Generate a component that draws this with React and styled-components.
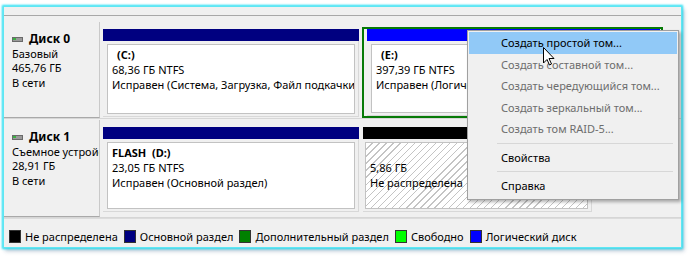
import React from "react";
import styled, { createGlobalStyle } from "styled-components";

const Global = createGlobalStyle`
  html, body { margin: 0; padding: 0; background: #ffffff; }
  body { font-family: "Noto Sans", "Open Sans", sans-serif; font-size: 11px; color: #000; }
`;

const Page = styled.div`
  width: 690px;
  height: 263px;
  padding: 6px 0 0 3px;
  box-sizing: border-box;
`;

const Panel = styled.div`
  position: relative;
  width: 679px;
  height: 242px;
  background: #f0f0f0;
  border: 1px solid #5fe6f2;
  box-sizing: border-box;
  box-shadow: 0 0 2px 1px #22e0f5, 2px 3px 4px rgba(40, 80, 120, 0.35);
  display: flex;
  flex-direction: column;
`;

const TopStrip = styled.div`
  height: 8px;
  border-bottom: 1px solid #a8a8a8;
  background: #f0f0f0;
  flex: none;
`;

const Rows = styled.div`
  padding-top: ${(p) => p.$top}px;
  display: flex;
  flex-direction: column;
  gap: 1px;
  flex: none;
`;

const Row = styled.div`
  display: flex;
  height: ${(p) => p.$h}px;
  border-bottom: 1px solid #d6d6d6;
`;

const DiskLabel = styled.div`
  width: 96px;
  flex: none;
  border-right: 1px solid #c9c9c9;
  border-bottom: 1px solid #a9a9a9;
  box-sizing: border-box;
  padding: 10px 0 0 8px;
  line-height: 14.6px;
  white-space: nowrap;
  overflow: hidden;
`;

const DiskTitle = styled.div`
  display: flex;
  align-items: center;
  gap: 6px;
  font-weight: bold;
  font-size: 12px;
`;

const Partitions = styled.div`
  flex: 1;
  display: flex;
  align-items: flex-start;
  padding: 7px 0 0 3px;
`;

const Partition = styled.div`
  width: ${(p) => p.$w}px;
  margin-left: ${(p) => p.$ml || 0}px;
  flex: none;
  display: flex;
  flex-direction: column;
`;

const Bar = styled.div`
  height: 12px;
  background: ${(p) => p.$color};
`;

const PartBody = styled.div`
  height: ${(p) => p.$h}px;
  padding: 3px 3px 2px ${(p) => p.$pl || 4}px;
  box-sizing: border-box;
  background: #f0f0f0;
  border-right: 1px solid #d8d8d8;
  border-bottom: 1px solid #d8d8d8;
  display: flex;
`;

const Inner = styled.div`
  flex: 1;
  background: ${(p) =>
    p.$hatched
      ? "repeating-linear-gradient(135deg, #ffffff 0 4px, #c4c4c4 4px 5px)"
      : "#ffffff"};
  border: 1px solid #c2c2c2;
  padding: 2px 0 0 4px;
  line-height: 15px;
  white-space: nowrap;
  overflow: hidden;
`;

const VolName = styled.div`
  font-weight: bold;
  padding-left: ${(p) => p.$pl || 0}px;
  height: 15px;
`;

const ExtFrame = styled.div`
  width: 301px;
  margin: -2px 0 0 3px;
  border: 2px solid #077a07;
  box-sizing: border-box;
  padding: 0 0 0 3px;
  flex: none;
`;

const Legend = styled.div`
  flex: 1;
  display: flex;
  align-items: center;
  padding: 6px 0 0 5px;
  border-top: 1px solid #dcdcdc;
  gap: 6px;
`;

const LegendItem = styled.div`
  display: flex;
  align-items: center;
  gap: 4px;
  white-space: nowrap;
`;

const Swatch = styled.span`
  width: 10px;
  height: 11px;
  background: ${(p) => p.$color};
  border: 1px solid #333;
  display: inline-block;
`;

const Menu = styled.div`
  position: absolute;
  left: 463px;
  top: 23px;
  width: 212px;
  background: #f0f0f0;
  border: 1px solid #a0a0a0;
  box-sizing: border-box;
  padding: 1px 1px 2px 1px;
  box-shadow: 2px 2px 3px rgba(0, 0, 0, 0.3);
  z-index: 2;
`;

const MenuItem = styled.div`
  height: 21.5px;
  line-height: 21.5px;
  padding-left: 32px;
  white-space: nowrap;
  color: ${(p) => (p.$disabled ? "#6d6d6d" : "#000")};
  background: ${(p) => (p.$hover ? "#91c9f7" : "transparent")};
`;

const MenuSep = styled.div`
  height: 1px;
  background: #d7d7d7;
  margin: 3px 4px 3px 28px;
`;

const Cursor = styled.svg`
  position: absolute;
  left: 539px;
  top: 40px;
  z-index: 3;
`;

const DiskIcon = () => (
  <svg width="11" height="5" viewBox="0 0 11 5">
    <rect x="0.5" y="0.5" width="10" height="4" fill="#9a9a9a" stroke="#6a6a6a" />
    <rect x="1" y="1" width="3" height="2" fill="#3cb043" />
  </svg>
);

export default function App() {
  return (
    <Page>
      <Global />
      <Panel>
        <TopStrip />
        <Rows $top={6}>
          <Row $h={96}>
            <DiskLabel>
              <DiskTitle>
                <DiskIcon />
                Диск 0
              </DiskTitle>
              <div>Базовый</div>
              <div>465,76 ГБ</div>
              <div>В сети</div>
            </DiskLabel>
            <Partitions>
              <Partition $w={256}>
                <Bar $color="#000080" />
                <PartBody $h={76}>
                  <Inner>
                    <VolName $pl={5}>(C:)</VolName>
                    <div>68,36 ГБ NTFS</div>
                    <div>Исправен (Система, Загрузка, Файл подкачки, Активен, Аварийный дамп памяти, Основной раздел)</div>
                  </Inner>
                </PartBody>
              </Partition>
              <ExtFrame>
                <Partition $w={293}>
                  <Bar $color="#0000ff" />
                  <PartBody $h={75}>
                    <Inner>
                      <VolName $pl={5}>(E:)</VolName>
                      <div>397,39 ГБ NTFS</div>
                      <div>Исправен (Логический диск)</div>
                    </Inner>
                  </PartBody>
                </Partition>
              </ExtFrame>
            </Partitions>
          </Row>
          <Row $h={97}>
            <DiskLabel>
              <DiskTitle>
                <DiskIcon />
                Диск 1
              </DiskTitle>
              <div>Съемное устройство</div>
              <div>28,91 ГБ</div>
              <div>В сети</div>
            </DiskLabel>
            <Partitions>
              <Partition $w={256}>
                <Bar $color="#000080" />
                <PartBody $h={73}>
                  <Inner>
                    <VolName>FLASH&nbsp;&nbsp;(D:)</VolName>
                    <div>23,05 ГБ NTFS</div>
                    <div>Исправен (Основной раздел)</div>
                  </Inner>
                </PartBody>
              </Partition>
              <Partition $w={229} $ml={4}>
                <Bar $color="#000000" />
                <PartBody $h={73} $pl={2}>
                  <Inner $hatched>
                    <VolName />
                    <div>5,86 ГБ</div>
                    <div>Не распределена</div>
                  </Inner>
                </PartBody>
              </Partition>
            </Partitions>
          </Row>
        </Rows>
        <Legend>
          <LegendItem><Swatch $color="#000000" />Не распределена</LegendItem>
          <LegendItem><Swatch $color="#000080" />Основной раздел</LegendItem>
          <LegendItem><Swatch $color="#008000" />Дополнительный раздел</LegendItem>
          <LegendItem><Swatch $color="#00ff00" />Свободно</LegendItem>
          <LegendItem><Swatch $color="#0000ff" />Логический диск</LegendItem>
        </Legend>
        <Menu>
          <MenuItem $hover>Создать простой том...</MenuItem>
          <MenuItem $disabled>Создать составной том...</MenuItem>
          <MenuItem $disabled>Создать чередующийся том...</MenuItem>
          <MenuItem $disabled>Создать зеркальный том...</MenuItem>
          <MenuItem $disabled>Создать том RAID-5...</MenuItem>
          <MenuSep />
          <MenuItem>Свойства</MenuItem>
          <MenuSep />
          <MenuItem>Справка</MenuItem>
        </Menu>
        <Cursor width="12" height="19" viewBox="0 0 12 19">
          <path d="M0.5 0.5 L0.5 16 L4 12.5 L6.5 18 L8.5 17 L6 11.5 L11 11.5 Z" fill="#ffffff" stroke="#000000" strokeWidth="1" strokeLinejoin="round" />
        </Cursor>
      </Panel>
    </Page>
  );
}
